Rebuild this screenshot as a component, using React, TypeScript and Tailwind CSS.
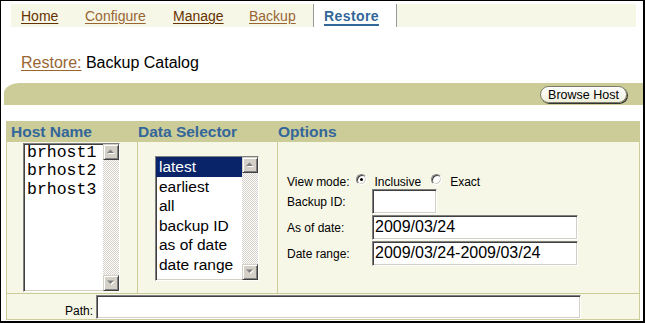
import type { ReactNode } from 'react';

const SUNKEN =
  'border border-t-[#808080] border-l-[#808080] border-b-white border-r-white shadow-[inset_1px_1px_0_#404040,inset_-1px_-1px_0_#d4d0c8]';

function Arrow({ up }: { up: boolean }) {
  const pts = up ? '0,4 3.5,0.5 7,4' : '0,0.5 3.5,4 7,0.5';
  return (
    <svg width="9" height="6" viewBox="0 0 9 6">
      <polygon points={pts} transform="translate(1,1)" fill="#ffffff" />
      <polygon points={pts} fill="#808080" />
    </svg>
  );
}

function ScrollButton({ up }: { up: boolean }) {
  return (
    <div className="flex h-[16px] w-[16px] items-center justify-center border border-t-[#d4d0c8] border-l-[#d4d0c8] border-b-[#404040] border-r-[#404040] bg-[#d4d0c8] shadow-[inset_1px_1px_0_#ffffff,inset_-1px_-1px_0_#808080]">
      <Arrow up={up} />
    </div>
  );
}

function ScrollBar() {
  return (
    <div className="flex h-full w-[16px] flex-col">
      <ScrollButton up />
      <div className="flex-1 bg-[repeating-conic-gradient(#d4d0c8_0_25%,#ffffff_0_50%)] bg-[length:2px_2px]" />
      <ScrollButton up={false} />
    </div>
  );
}

function Radio({ checked }: { checked?: boolean }) {
  return (
    <span className="mt-[1px] flex h-[11px] w-[11px] items-center justify-center rounded-full border border-t-[#808080] border-l-[#808080] border-b-white border-r-white bg-white shadow-[inset_1px_1px_0_#404040,inset_-1px_-1px_0_#d4d0c8]">
      {checked && <span className="h-[3px] w-[3px] rounded-full bg-black" />}
    </span>
  );
}

function Field({ label, width, value }: { label: string; width: string; value?: string }) {
  return (
    <div className="flex h-[26px] items-start">
      <div className="flex h-[25px] w-[85px] items-center text-[12px] leading-[14px]">{label}</div>
      <div className={`${SUNKEN} ${width} h-[25px] bg-white pl-[2px] text-[16px] leading-[21px]`}>{value}</div>
    </div>
  );
}

function Tab({ w, dark, children }: { w: string; dark?: boolean; children: ReactNode }) {
  return (
    <div className={`${w} flex items-center pt-[1px]`}>
      <span className={`underline underline-offset-[2px] ${dark ? 'text-[#663300]' : 'text-[#996633]'}`}>{children}</span>
    </div>
  );
}

export default function App() {
  const hosts = ['brhost1', 'brhost2', 'brhost3'];
  const selectors = ['latest', 'earliest', 'all', 'backup ID', 'as of date', 'date range'];

  return (
    <div className="h-[324px] w-[645px] bg-white">
      <div className="flex h-[323px] flex-col border-b-2 border-l border-r-2 border-t border-black font-['Liberation_Sans',Arial,sans-serif] text-black">
        {/* tabs */}
        <div className="ml-[10px] mr-[7px] mt-[3px] flex h-[23px] bg-[#f7f7e7] pl-[10px] text-[14px] leading-[16px]">
          <Tab w="w-[64px]" dark>Home</Tab>
          <Tab w="w-[88px]">Configure</Tab>
          <Tab w="w-[76px]" dark>Manage</Tab>
          <Tab w="w-[64px]">Backup</Tab>
          <div className="w-px bg-[#999999]" />
          <div className="flex w-[82px] items-center bg-white pl-[10px] pt-[1px]">
            <span className="font-bold tracking-[0.4px] text-[#336699] underline decoration-2 underline-offset-[3px]">Restore</span>
          </div>
          <div className="w-px bg-[#999999]" />
        </div>

        {/* page heading */}
        <div className="ml-[20px] mt-[27px] h-[18px] text-[16px] leading-[18px]">
          <span className="text-[#996633] underline underline-offset-[2px]">Restore:</span> Backup Catalog
        </div>

        {/* action band */}
        <div className="ml-[3px] mt-[11px] flex h-[22px] items-start justify-end rounded-tl-[16px_10px] bg-[#cccc99] pr-[16px] pt-[3px]">
          <button className="flex h-[17px] w-[87px] items-center justify-center rounded-full border border-[#7a7a66] bg-gradient-to-b from-white to-[#efefdc] text-[12.5px] leading-[14px] text-black shadow-[1px_1px_0_#333333]">
            Browse Host
          </button>
        </div>

        {/* table */}
        <div className="ml-[5px] mr-[3px] mt-[16px] border border-[#cccc99] bg-[#f7f7e7]">
          <div className="grid h-[20px] grid-cols-[131px_140px_1fr] bg-[#cccc99] text-[15.5px] font-bold leading-[18px] text-[#336699]">
            <div className="flex items-center pl-[4px]">Host Name</div>
            <div className="flex items-center">Data Selector</div>
            <div className="flex items-center">Options</div>
          </div>

          <div className="grid h-[151px] grid-cols-[131px_140px_1fr]">
            <div className="border-r border-[#cccc99] pl-[16px] pt-[1px]">
              <div className={`${SUNKEN} flex h-[149px] w-[97px] bg-white`}>
                <div className="flex-1 pl-[3px] font-['Liberation_Mono','Courier_New',monospace] text-[16.5px] leading-[18.3px]">
                  {hosts.map((h) => (
                    <div key={h}>{h}</div>
                  ))}
                </div>
                <ScrollBar />
              </div>
            </div>

            <div className="border-r border-[#cccc99] pl-[17px] pt-[14px]">
              <div className={`${SUNKEN} flex h-[125px] w-[104px] bg-white`}>
                <div className="flex-1 text-[15.5px] leading-[19.5px]">
                  {selectors.map((s, i) => (
                    <div key={s} className={`pl-[3px] ${i === 0 ? 'bg-[#0a246a] text-white' : ''}`}>
                      {s}
                    </div>
                  ))}
                </div>
                <ScrollBar />
              </div>
            </div>

            <div className="pl-[9px] pt-[31px]">
              <div className="flex h-[16px] items-start text-[12px] leading-[14px]">
                <span className="mt-[2px]">View mode:</span>
                <span className="ml-[7px]">
                  <Radio checked />
                </span>
                <span className="ml-[7px] mt-[2px]">Inclusive</span>
                <span className="ml-[10px]">
                  <Radio />
                </span>
                <span className="ml-[8px] mt-[2px]">Exact</span>
              </div>
              <Field label="Backup ID:" width="w-[65px]" />
              <Field label="As of date:" width="w-[206px]" value="2009/03/24" />
              <Field label="Date range:" width="w-[206px]" value="2009/03/24-2009/03/24" />
            </div>
          </div>

          <div className="flex h-[26px] border-t border-[#cccc99]">
            <div className="w-[89px] pr-[3px] pt-[10px] text-right text-[12px] leading-[14px]">Path:</div>
            <div className={`${SUNKEN} mt-[1px] h-[24px] w-[485px] bg-white`} />
          </div>
        </div>
      </div>
    </div>
  );
}
